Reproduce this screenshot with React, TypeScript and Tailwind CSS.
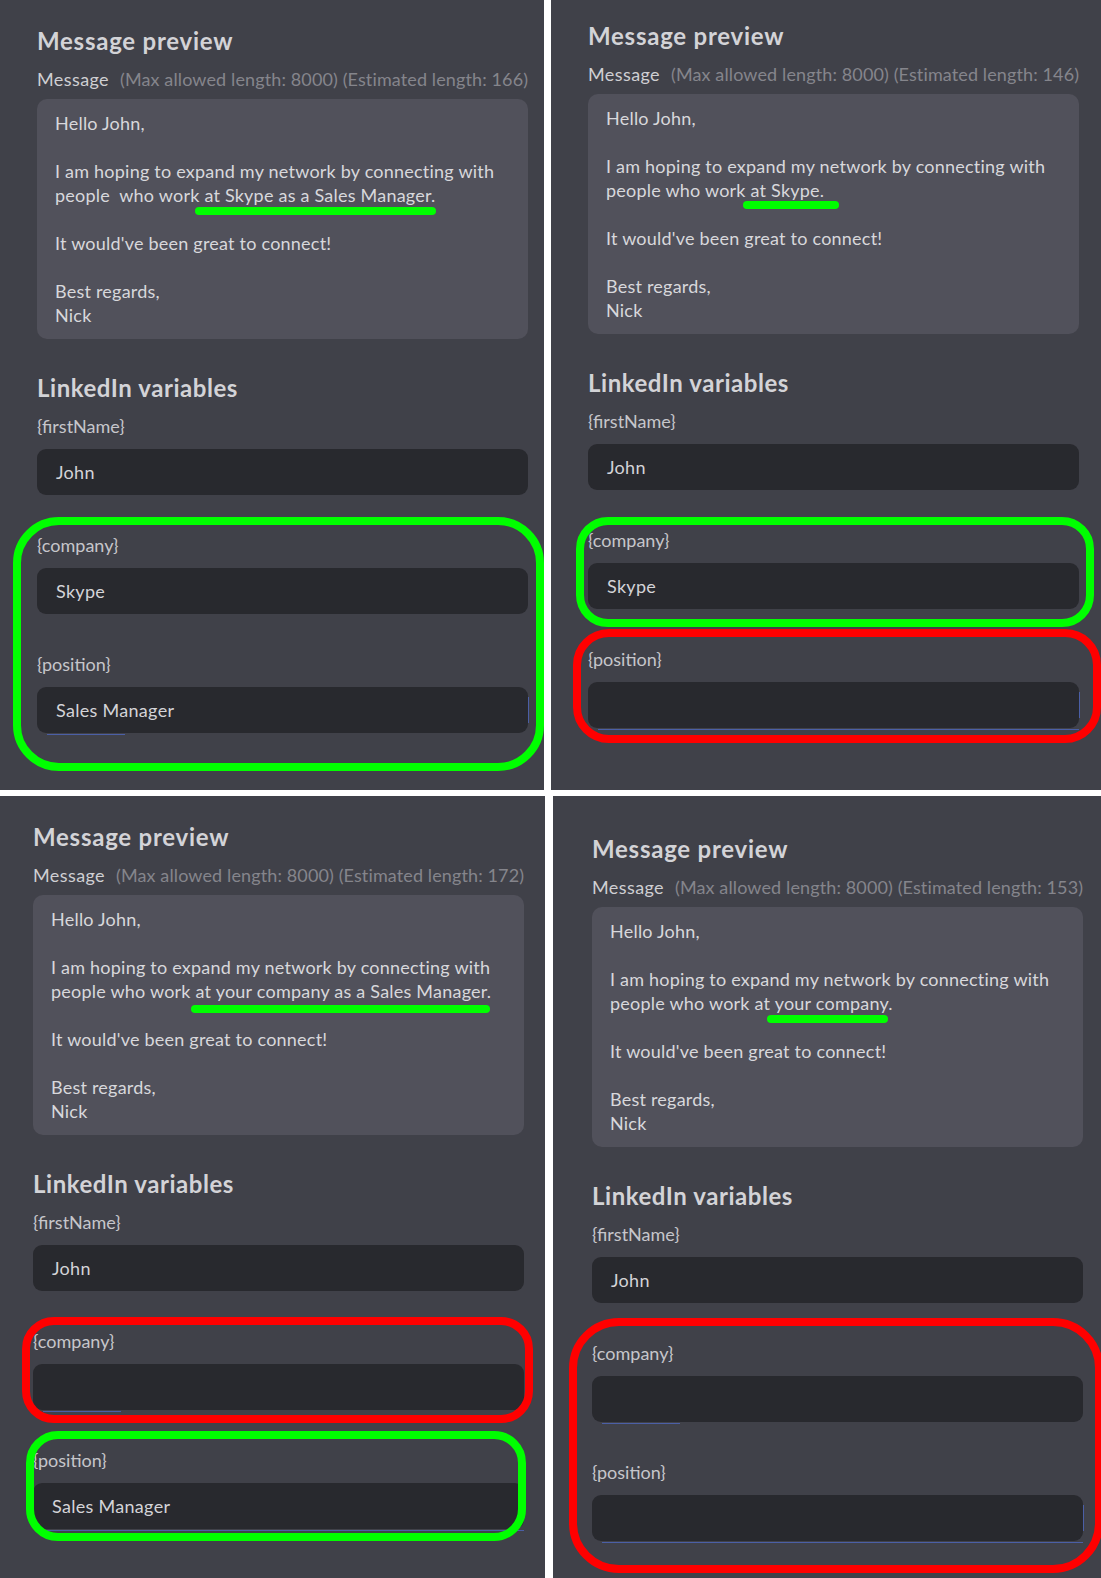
import React from "react"

interface FieldSpec {
  name: string
  value: string
  line?: "short" | "full"
  edge?: boolean
}

interface PanelProps {
  panelClass: string
  contentClass: string
  estimated: number
  second: string[]
  fields: FieldSpec[]
  children?: React.ReactNode
}

function VariableField({ field, first }: { field: FieldSpec; first: boolean }) {
  return (
    <div className={first ? "mt-[10px]" : "mt-[38px]"}>
      <div className="text-[18px] leading-[24px] text-[#c6c6cb]">{field.name}</div>
      <div className="relative mt-[11px] flex h-[46px] items-center rounded-[9px] bg-[#28292e] pl-[19px] text-[18px] tracking-[0.3px] text-[#d4d4d8]">
        {field.value}
        {/* leftover focus underline from the input widget */}
        {field.line === "short" && (
          <span className="absolute left-[10px] top-full mt-px h-px w-[78px] bg-[#4b5fa6]" />
        )}
        {field.line === "full" && (
          <span className="absolute left-[10px] right-0 top-full mt-px h-px bg-[#4b5fa6]" />
        )}
        {field.edge && <span className="absolute -right-px top-[10px] h-[26px] w-px bg-[#4b5fa6]" />}
      </div>
    </div>
  )
}

function Panel({ panelClass, contentClass, estimated, second, fields, children }: PanelProps) {
  const lines = ["Hello John,", "", ...second, "", "It would've been great to connect!", "", "Best regards,", "Nick"]
  return (
    <div className={`relative overflow-hidden bg-[#404149] font-['Lato','Open_Sans',sans-serif] ${panelClass}`}>
      <div className={`w-[491px] ${contentClass}`}>
        <h2 className="text-[24px] font-bold leading-[32px] tracking-[0.75px] text-[#d3d3d7]">Message preview</h2>
        <div className="mt-[10px] flex whitespace-nowrap text-[18px] leading-[24px]">
          <span className="tracking-[0.4px] text-[#cfcfd3]">Message</span>
          <span className="ml-[11px] tracking-[0.12px] text-[#85858c]">
            (Max allowed length: 8000) (Estimated length: {estimated})
          </span>
        </div>
        <div className="mt-[8px] rounded-[10px] bg-[#51515b] px-[18px] py-3 text-[18px] leading-[24px] tracking-[0.22px] text-[#d8d8dc]">
          {lines.map((line, i) => (
            <div key={i} className="h-[24px] whitespace-pre">
              {line}
            </div>
          ))}
        </div>
        <h2 className="mt-[33px] text-[24px] font-bold leading-[32px] tracking-[0.55px] text-[#d3d3d7]">
          LinkedIn variables
        </h2>
        {fields.map((f, i) => (
          <VariableField key={f.name} field={f} first={i === 0} />
        ))}
      </div>
      {children}
    </div>
  )
}

// annotation strokes drawn over the screenshots
function Underline({ className }: { className: string }) {
  return <div className={`absolute h-[8px] rounded-full bg-[#00ff00] ${className}`} />
}

function Ring({ className }: { className: string }) {
  return <div className={`pointer-events-none absolute border-[8px] ${className}`} />
}

export default function App() {
  return (
    <div className="flex h-[1578px] w-[1101px] flex-col gap-[6px] bg-white">
      <div className="flex h-[790px] gap-[7px]">
        <Panel
          panelClass="w-[544px]"
          contentClass="ml-[37px] pt-[25px]"
          estimated={166}
          second={["I am hoping to expand my network by connecting with", "people  who work at Skype as a Sales Manager."]}
          fields={[
            { name: "{firstName}", value: "John" },
            { name: "{company}", value: "Skype" },
            { name: "{position}", value: "Sales Manager", line: "short", edge: true },
          ]}
        >
          <Underline className="left-[195px] top-[207px] w-[241px]" />
          <Ring className="left-[13px] top-[517px] h-[254px] w-[531px] rounded-[46px] border-[#00ff00]" />
        </Panel>
        <Panel
          panelClass="w-[550px]"
          contentClass="ml-[37px] pt-[20px]"
          estimated={146}
          second={["I am hoping to expand my network by connecting with", "people who work at Skype."]}
          fields={[
            { name: "{firstName}", value: "John" },
            { name: "{company}", value: "Skype" },
            { name: "{position}", value: "", line: "full", edge: true },
          ]}
        >
          <Underline className="left-[192px] top-[201px] w-[96px]" />
          <Ring className="left-[25px] top-[517px] h-[110px] w-[518px] rounded-[32px] border-[#00ff00]" />
          <Ring className="left-[22px] top-[629px] h-[114px] w-[528px] rounded-[36px] border-[#ff0000]" />
        </Panel>
      </div>
      <div className="flex h-[782px] gap-[8px]">
        <Panel
          panelClass="w-[545px]"
          contentClass="ml-[33px] pt-[25px]"
          estimated={172}
          second={["I am hoping to expand my network by connecting with", "people who work at your company as a Sales Manager."]}
          fields={[
            { name: "{firstName}", value: "John" },
            { name: "{company}", value: "", line: "short" },
            { name: "{position}", value: "Sales Manager", line: "full" },
          ]}
        >
          <Underline className="left-[191px] top-[209px] w-[299px]" />
          <Ring className="left-[22px] top-[521px] h-[106px] w-[511px] rounded-[32px] border-[#ff0000]" />
          <Ring className="left-[26px] top-[635px] h-[110px] w-[500px] rounded-[32px] border-[#00ff00]" />
        </Panel>
        <Panel
          panelClass="w-[548px]"
          contentClass="ml-[39px] pt-[37px]"
          estimated={153}
          second={["I am hoping to expand my network by connecting with", "people who work at your company."]}
          fields={[
            { name: "{firstName}", value: "John" },
            { name: "{company}", value: "", line: "short" },
            { name: "{position}", value: "", line: "full", edge: true },
          ]}
        >
          <Underline className="left-[214px] top-[219px] w-[121px]" />
          <Ring className="left-[16px] top-[522px] h-[255px] w-[534px] rounded-[50px] border-[#ff0000]" />
        </Panel>
      </div>
    </div>
  )
}
